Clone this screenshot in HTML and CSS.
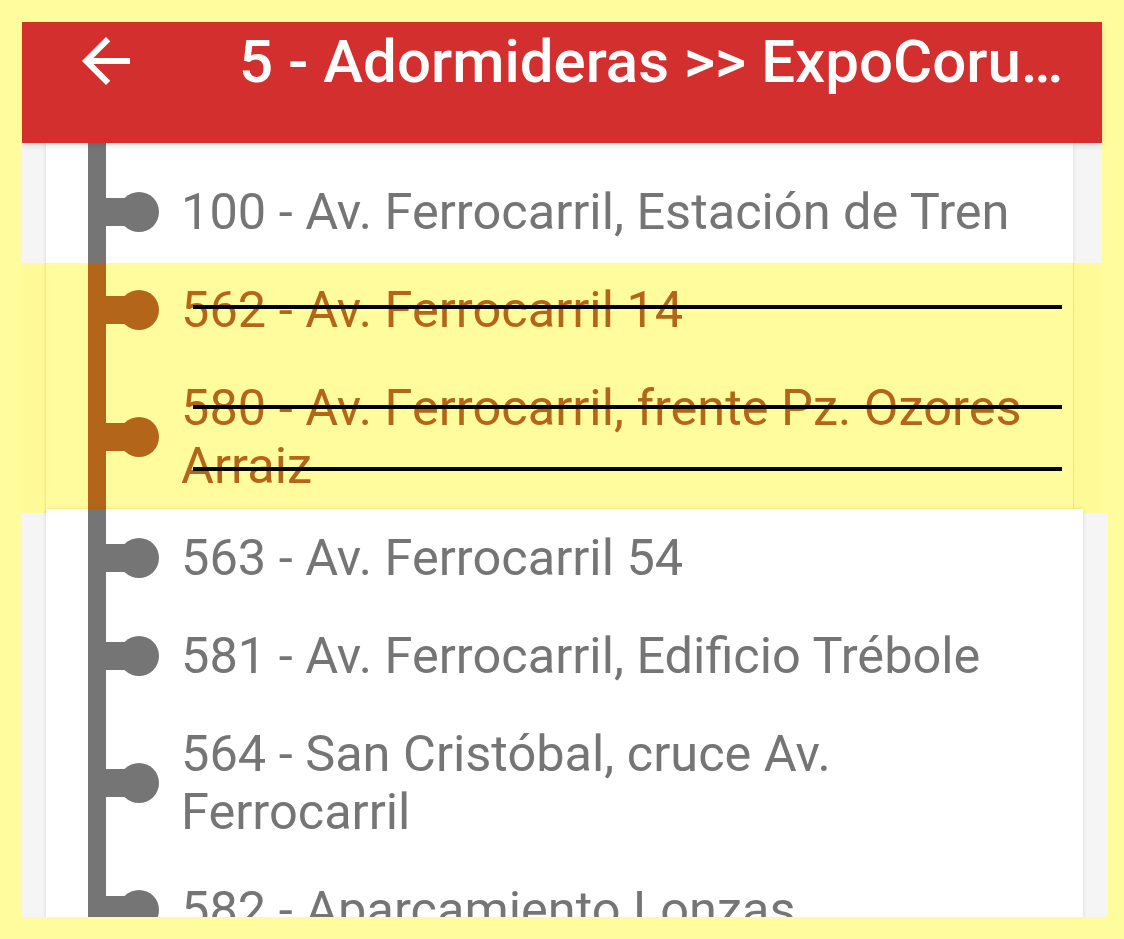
FILE: index.html
```html
<!DOCTYPE html>
<html lang="es">
<head>
    <meta charset="UTF-8">
    <meta name="viewport" content="width=device-width, initial-scale=1.0">
    <title>5 - Adormideras &gt;&gt; ExpoCoruña</title>
    <link rel="stylesheet" href="styles.css">
</head>
<body>

    <div class="screen">
        <!-- App bar -->
        <div class="appbar">
            <div class="toolbar">
                <svg class="back" viewBox="0 0 24 24" width="72" height="72">
                    <path d="M20 11H7.83l5.59-5.59L12 4l-8 8 8 8 1.41-1.41L7.83 13H20v-2z" fill="#fff"/>
                </svg>
                <h1 class="title">5 - Adormideras &gt;&gt; ExpoCoru…</h1>
            </div>
        </div>

        <!-- Stops before the marked ones -->
        <div class="panel panel-top">
            <div class="card">
                <div class="stop"><span class="node"></span><span class="name">100 - Av. Ferrocarril, Estación de Tren</span></div>
            </div>
        </div>

        <!-- Marked (removed) stops -->
        <div class="panel panel-marked">
            <div class="card">
                <div class="stop first"><span class="node"></span><span class="name">562 - Av. Ferrocarril 14</span></div>
                <div class="stop"><span class="node"></span><span class="name">580 - Av. Ferrocarril, frente Pz. Ozores Arraiz</span></div>
            </div>
            <div class="strike s1"></div>
            <div class="strike s2"></div>
            <div class="strike s3"></div>
        </div>

        <!-- Remaining stops -->
        <div class="panel panel-bottom">
            <div class="card">
                <div class="stop first"><span class="node"></span><span class="name">563 - Av. Ferrocarril 54</span></div>
                <div class="stop"><span class="node"></span><span class="name">581 - Av. Ferrocarril, Edificio Trébole</span></div>
                <div class="stop"><span class="node"></span><span class="name">564 - San Cristóbal, cruce Av. Ferrocarril</span></div>
                <div class="stop"><span class="node"></span><span class="name">582 - Aparcamiento Lonzas</span></div>
            </div>
        </div>
    </div>

</body>
</html>
```

FILE: styles.css
```css
/* General Reset */
* {
    margin: 0;
    padding: 0;
    box-sizing: border-box;
    font-family: 'Roboto', 'Noto Sans', sans-serif;
}

body {
    background: #fffc9d;
    overflow: hidden;
}

.screen {
    margin: 22px 0 0 22px;
    width: 1086px;
    height: 895px;
    overflow: hidden;
    display: flex;
    flex-direction: column;
}

/* App bar */
.appbar {
    width: 1080px;
    height: 121px;
    flex-shrink: 0;
    background: #d32f2f;
    box-shadow: 0 2px 6px rgba(0, 0, 0, 0.15);
    position: relative;
    z-index: 2;
}

.toolbar {
    height: 78px;
    display: flex;
    align-items: center;
}

.back {
    margin-left: 48px;
    flex-shrink: 0;
}

.title {
    margin-left: 97px;
    font-size: 60px;
    font-weight: 500;
    color: #fff;
    white-space: nowrap;
}

/* Panels with cards */
.panel {
    flex-shrink: 0;
    background: #f5f5f5;
    padding-left: 24px;
    position: relative;
}

.card {
    background: linear-gradient(#757575, #757575) no-repeat 42px 0 / 18px 100%, #fff;
    box-shadow: 0 0 4px rgba(0, 0, 0, 0.12);
}

.panel-top {
    width: 1080px;
    height: 120px;
}

.panel-top .card {
    margin-right: 29px;
    height: 120px;
    padding-top: 20px;
}

.panel-marked {
    width: 1080px;
    height: 250px;
    overflow: hidden;
    background: #fffa98;
}

.panel-marked .card {
    margin-right: 28px;
    height: 252px;
    margin-top: -2px;
    background: linear-gradient(#b3661a, #b3661a) no-repeat 42px 0 / 18px 100%, #fffc9d;
    box-shadow: -1px 0 2px rgba(220, 180, 60, 0.35);
    border-right: 1px solid #f6e27c;
}

.panel-bottom {
    width: 1086px;
    flex-grow: 1;
}

.panel-bottom .card {
    margin-right: 25px;
    height: 100%;
}

.panel-bottom .stop.first {
    margin-top: -4px;
}

/* Stops */
.stop {
    display: flex;
    align-items: center;
    padding: 20px 30px 20px 0;
    font-size: 50.5px;
    line-height: 58px;
    color: #757575;
}

.node {
    display: flex;
    align-items: center;
    margin-left: 60px;
    flex-shrink: 0;
}

.node::before {
    content: '';
    width: 20px;
    height: 28px;
    background: #757575;
}

.node::after {
    content: '';
    width: 40px;
    height: 40px;
    margin-left: -7px;
    border-radius: 50%;
    background: #757575;
}

.name {
    margin-left: 22px;
}

.panel-marked .stop {
    color: #b3661a;
}

.panel-marked .node::before,
.panel-marked .node::after {
    background: #b3661a;
}

/* Strike-out marks drawn over the removed stops */
.strike {
    position: absolute;
    left: 171px;
    width: 869px;
    height: 4px;
    background: #000;
}

.s1 { top: 42px; }
.s2 { top: 142px; }
.s3 { top: 204px; }
```
